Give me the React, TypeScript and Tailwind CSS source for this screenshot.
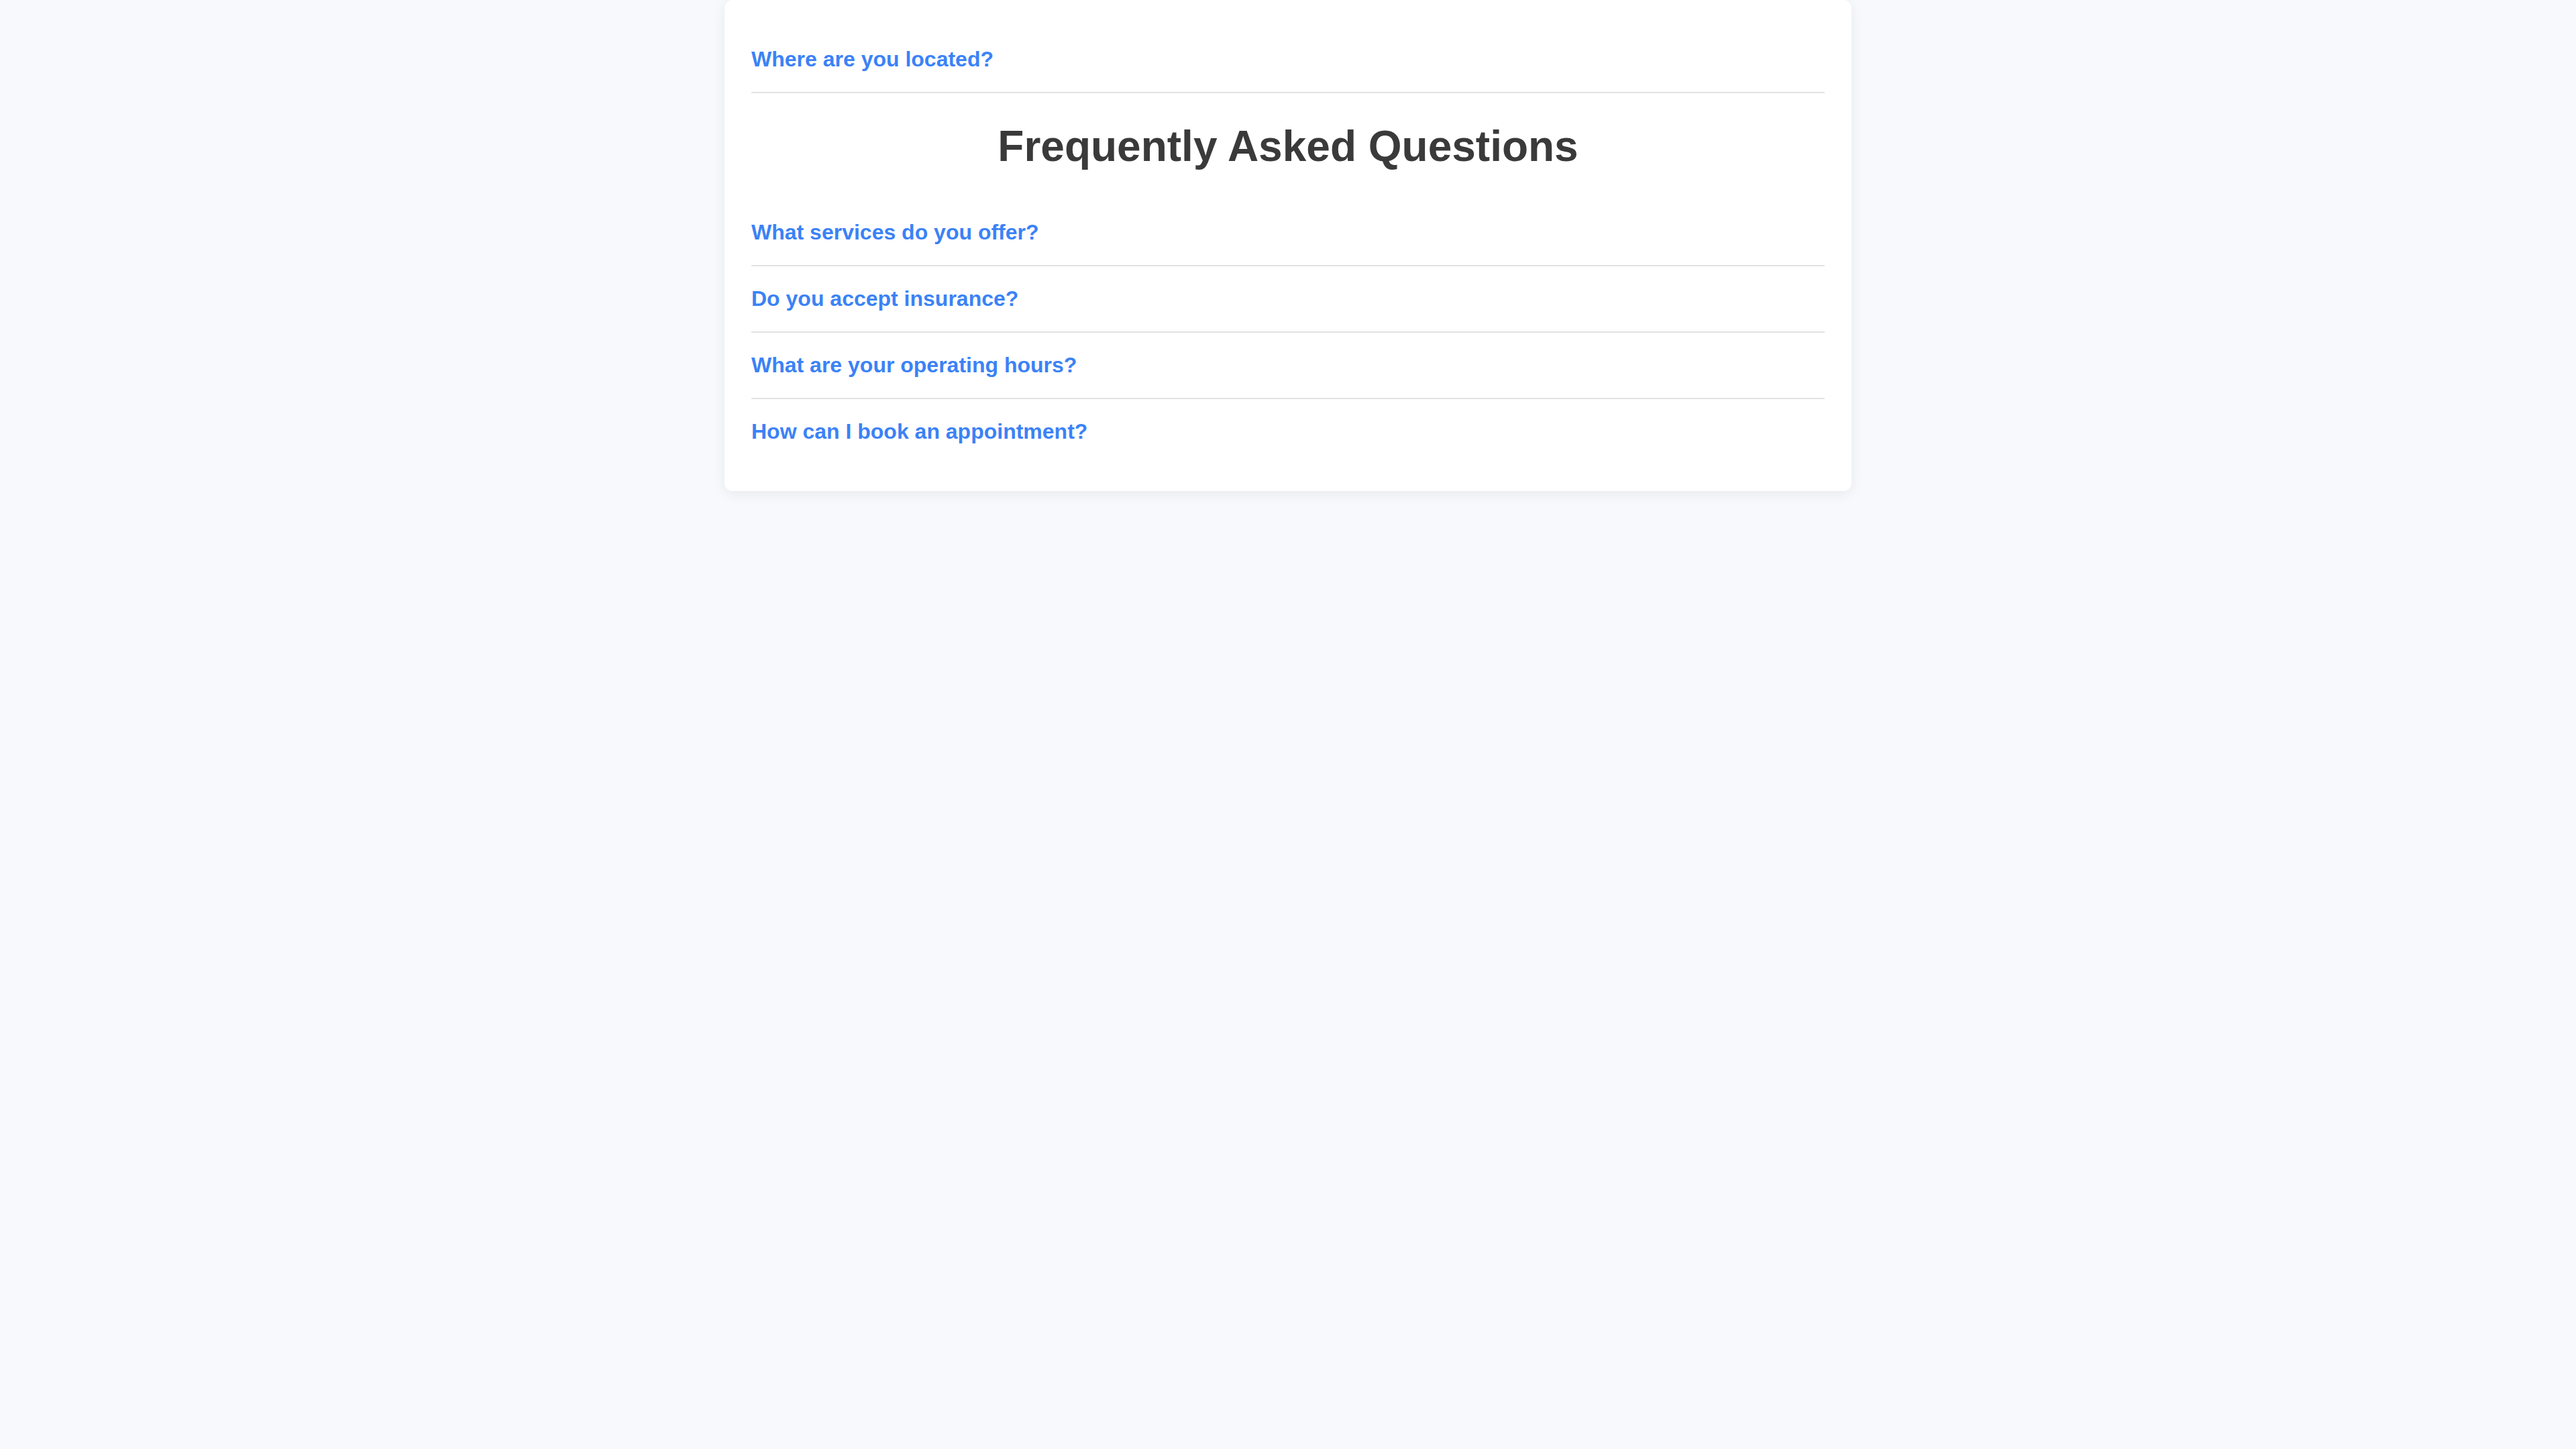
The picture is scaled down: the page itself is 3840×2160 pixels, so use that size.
const QUESTIONS_TOP = ["Where are you located?"];

const QUESTIONS = [
  "What services do you offer?",
  "Do you accept insurance?",
  "What are your operating hours?",
  "How can I book an appointment?",
];

function FaqItem({ question, last }: { question: string; last?: boolean }) {
  return (
    <div className={`py-[30px] ${last ? "" : "border-b-2 border-[#e2e2e2]"}`}>
      <h3 className="text-[32px] leading-[1.15] font-bold text-[#3b82f6] cursor-pointer">{question}</h3>
    </div>
  );
}

export default function App() {
  return (
    <div
      className="min-h-screen bg-[#f7f9fc]"
      style={{ fontFamily: '"Liberation Sans", Arial, sans-serif' }}
    >
      <div className="w-[1680px] mx-auto bg-white rounded-[12px] p-[40px] shadow-[0_4px_20px_rgba(0,0,0,0.07)]">
        {QUESTIONS_TOP.map((q) => (
          <FaqItem key={q} question={q} />
        ))}
        <h1 className="my-[43px] text-center text-[64px] leading-[1.15] font-bold text-[#3a3a3a]">
          Frequently Asked Questions
        </h1>
        {QUESTIONS.map((q, i) => (
          <FaqItem key={q} question={q} last={i === QUESTIONS.length - 1} />
        ))}
      </div>
    </div>
  );
}
